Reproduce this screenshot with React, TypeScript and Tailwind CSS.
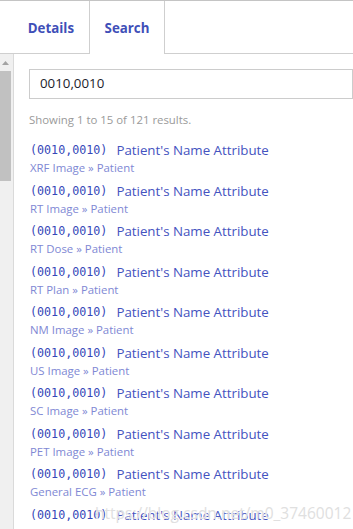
import React from "react";

const items = [
  "XRF Image",
  "RT Image",
  "RT Dose",
  "RT Plan",
  "NM Image",
  "US Image",
  "SC Image",
  "PET Image",
  "General ECG",
  "Ambulatory ECG",
];

export default function App() {
  return (
    <div
      className="relative w-[353px] h-[529px] overflow-hidden bg-white border-t border-[#c4c4c4]"
      style={{ fontFamily: '"Open Sans", "Noto Sans", sans-serif' }}
    >
      {/* Tabs */}
      <div className="flex h-[53px]">
        <div className="w-[89px] border-b border-[#cfcfcf] flex items-center justify-end pr-[15px] pt-[3px]">
          <span className="text-[13.3px] font-bold text-[#3f4fb8]">Details</span>
        </div>
        <div className="w-[76px] border-x border-[#cfcfcf] flex items-center justify-center pt-[3px]">
          <span className="text-[13.3px] font-bold text-[#3f4fb8]">Search</span>
        </div>
        <div className="flex-1 border-b border-[#cfcfcf]" />
      </div>

      <div className="flex h-[476px]">
        {/* Scrollbar */}
        <div className="w-[14px] shrink-0 bg-[#f0f0f0] border-r border-[#dadada] flex flex-col">
          <div className="h-[17px] w-[11px] flex items-center justify-center">
            <svg width="7" height="4" viewBox="0 0 7 4">
              <polygon points="0,4 7,4 3.5,0" fill="#a3a3a3" />
            </svg>
          </div>
          <div className="w-[11px] h-[110px] bg-[#c1c1c1]" />
        </div>

        {/* Content */}
        <div className="flex-1 pl-[15px] pt-[15px]">
          <div className="h-[30px] border border-[#cccccc] flex items-center pl-[10px]">
            <span className="text-[13.3px] text-[#1c1c2c]">0010,0010</span>
          </div>
          <div className="mt-[13px] text-[11.4px] leading-[16px] text-[#9a9a9a]">
            Showing 1 to 15 of 121 results.
          </div>
          <div className="mt-[12px] flex flex-col">
            {items.map((it) => (
              <div key={it} className="h-[40.5px] pl-[1px]">
                <div className="h-[20px] mt-[1px] flex items-center whitespace-nowrap">
                  <span
                    className="text-[11.7px] text-[#3547b8]"
                    style={{ fontFamily: '"DejaVu Sans Mono", "Liberation Mono", monospace' }}
                  >
                    (0010,0010)
                  </span>
                  <span className="ml-[9px] text-[13.3px] text-[#4453c0]">
                    Patient's Name Attribute
                  </span>
                </div>
                <div className="h-[16px] -mt-[1px] text-[11.4px] leading-[16px] text-[#8088d4] whitespace-nowrap">
                  {it} » Patient
                </div>
              </div>
            ))}
          </div>
        </div>
      </div>

      {/* Watermark */}
      <div
        className="absolute left-[95px] top-[501px] text-[15.5px] text-[#e0e0e0] whitespace-nowrap pointer-events-none"
        style={{ textShadow: "0 0 1px #ffffff" }}
      >
        https://blog.csdn.net/m0_37460012
      </div>
    </div>
  );
}
